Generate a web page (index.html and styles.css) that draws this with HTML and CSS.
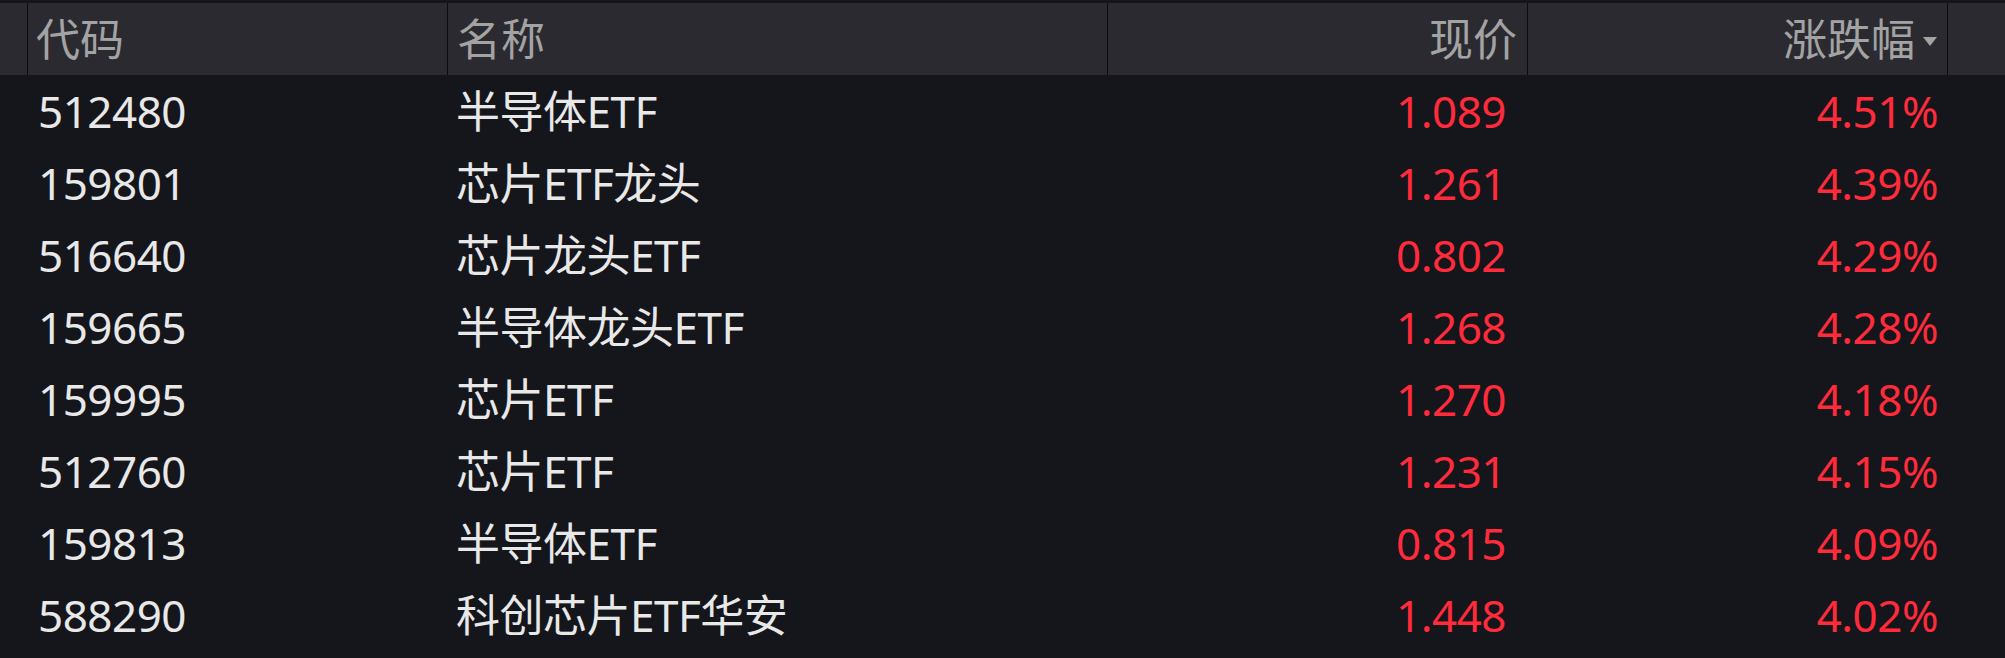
FILE: index.html
```html
<!DOCTYPE html>
<html lang="zh-CN">
<head>
<meta charset="utf-8">
<link rel="stylesheet" href="styles.css">
</head>
<body>
<div class="table">
  <div class="row head">
    <div class="cell c0"></div>
    <div class="cell c1">代码</div>
    <div class="cell c2">名称</div>
    <div class="cell c3">现价</div>
    <div class="cell c4">涨跌幅<span class="sort"></span></div>
    <div class="cell c5"></div>
  </div>
  <div class="row">
    <div class="cell c0"></div><div class="cell c1">512480</div><div class="cell c2">半导体ETF</div><div class="cell c3 up">1.089</div><div class="cell c4 up">4.51%</div><div class="cell c5"></div>
  </div>
  <div class="row">
    <div class="cell c0"></div><div class="cell c1">159801</div><div class="cell c2">芯片ETF龙头</div><div class="cell c3 up">1.261</div><div class="cell c4 up">4.39%</div><div class="cell c5"></div>
  </div>
  <div class="row">
    <div class="cell c0"></div><div class="cell c1">516640</div><div class="cell c2">芯片龙头ETF</div><div class="cell c3 up">0.802</div><div class="cell c4 up">4.29%</div><div class="cell c5"></div>
  </div>
  <div class="row">
    <div class="cell c0"></div><div class="cell c1">159665</div><div class="cell c2">半导体龙头ETF</div><div class="cell c3 up">1.268</div><div class="cell c4 up">4.28%</div><div class="cell c5"></div>
  </div>
  <div class="row">
    <div class="cell c0"></div><div class="cell c1">159995</div><div class="cell c2">芯片ETF</div><div class="cell c3 up">1.270</div><div class="cell c4 up">4.18%</div><div class="cell c5"></div>
  </div>
  <div class="row">
    <div class="cell c0"></div><div class="cell c1">512760</div><div class="cell c2">芯片ETF</div><div class="cell c3 up">1.231</div><div class="cell c4 up">4.15%</div><div class="cell c5"></div>
  </div>
  <div class="row">
    <div class="cell c0"></div><div class="cell c1">159813</div><div class="cell c2">半导体ETF</div><div class="cell c3 up">0.815</div><div class="cell c4 up">4.09%</div><div class="cell c5"></div>
  </div>
  <div class="row">
    <div class="cell c0"></div><div class="cell c1">588290</div><div class="cell c2">科创芯片ETF华安</div><div class="cell c3 up">1.448</div><div class="cell c4 up">4.02%</div><div class="cell c5"></div>
  </div>
</div>
</body>
</html>
```

FILE: styles.css
```css
html, body {
  margin: 0;
  padding: 0;
  background: #14161b;
}
body {
  width: 2005px;
  height: 658px;
  overflow: hidden;
  padding-top: 3px;
  box-sizing: border-box;
  font-family: "Noto Sans", "Noto Sans CJK SC", sans-serif;
  font-size: 44px;
  letter-spacing: -0.5px;
  color: #e8e8e8;
}
.table {
  display: flex;
  flex-direction: column;
}
.row {
  display: flex;
  height: 72px;
  align-items: center;
}
.row.head {
  background: #2b2a31;
  color: #a3a3a3;
  letter-spacing: 0;
}
.cell {
  box-sizing: border-box;
  white-space: nowrap;
  line-height: 72px;
  height: 72px;
}
.c0 { width: 27px; }
.c1 { width: 420px; padding-left: 11px; }
.c2 { width: 660px; padding-left: 9px; }
.c3 { width: 420px; text-align: right; padding-right: 21px; }
.c4 { width: 420px; text-align: right; padding-right: 9px; }
.c5 { flex: 1; }
.head .cell { border-left: 1px solid #0c0c0e; }
.head .c0 { border-left: none; }
.head .c1 { padding-left: 8px; }
.head .c3 { padding-right: 10px; }
.head .c4 { padding-right: 10px; }
.up { color: #ff2b3b; }
.sort {
  display: inline-block;
  width: 0;
  height: 0;
  margin-left: 8px;
  border-left: 7px solid transparent;
  border-right: 7px solid transparent;
  border-top: 9px solid #a3a3a3;
  vertical-align: 10px;
}
```
